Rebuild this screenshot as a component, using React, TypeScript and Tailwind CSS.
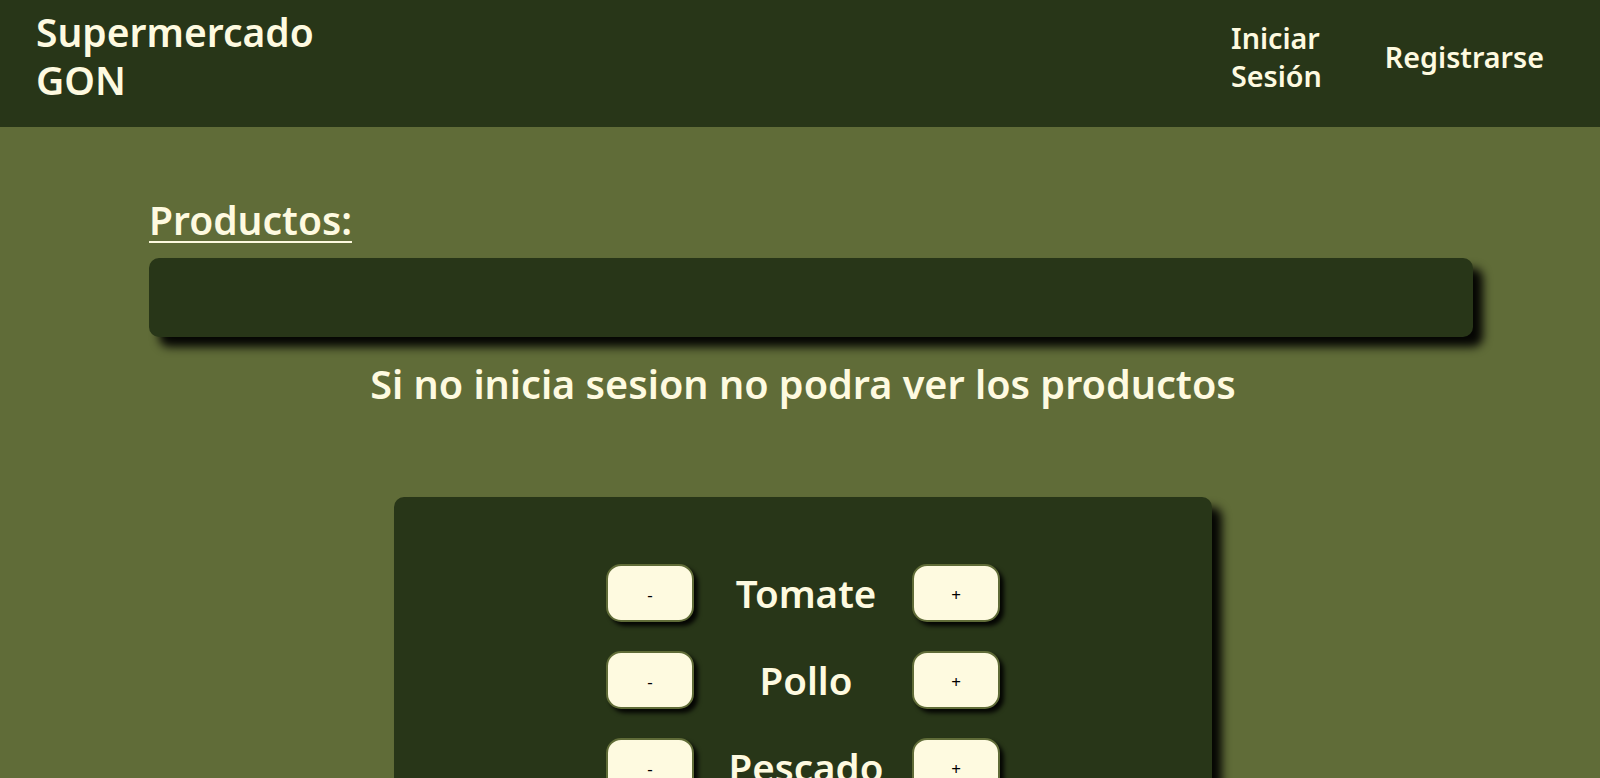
import React from "react";

const font = { fontFamily: '"Noto Sans", "Open Sans", sans-serif' };

function Row({ name }: { name: string }) {
  return (
    <div className="grid grid-cols-[88px_218px_88px] items-center h-[58px]">
      <button className="w-[88px] h-[58px] rounded-[15px] bg-[#fefae0] border-2 border-[#606c38] text-black text-[17px] pt-[3px] shadow-[4px_4px_4px_rgba(0,0,0,0.9)]">-</button>
      <div className="text-center text-[#fefae0] text-[38.5px] font-semibold leading-none pl-[6px]">{name}</div>
      <button className="w-[88px] h-[58px] rounded-[15px] bg-[#fefae0] border-2 border-[#606c38] text-black text-[17px] pt-[3px] shadow-[4px_4px_4px_rgba(0,0,0,0.9)]">+</button>
    </div>
  );
}

export default function App() {
  return (
    <div style={font} className="bg-[#606c38] overflow-hidden h-[778px]">
      <header className="h-[127px] bg-[#283618] flex items-start justify-between pl-[36px] pr-[56px]">
        <h1 className="text-[#fefae0] text-[39px] leading-[48px] font-semibold pt-[8px]">
          Supermercado
          <br />
          GON
        </h1>
        <nav className="flex items-center gap-[63px] text-[#fefae0] text-[28.7px] font-semibold mt-[19px]">
          <a className="leading-[38px] block">
            Iniciar
            <br />
            Sesión
          </a>
          <a className="leading-[38px] block">Registrarse</a>
        </nav>
      </header>
      <main className="pl-[149px] pr-[127px] pt-[73px]">
        <h2 className="text-[#fefae0] text-[39px] font-semibold underline underline-offset-[6px] decoration-[2px] leading-[40px]">Productos:</h2>
        <div className="mt-[18px] h-[79px] rounded-[10px] bg-[#283618] shadow-[10px_10px_10px_rgba(0,0,0,0.95)]"></div>
        <p className="mt-[21px] text-center text-[#fefae0] text-[39.6px] font-semibold leading-[52px] pr-[16px]">
          Si no inicia sesion no podra ver los productos
        </p>
      </main>
      <div className="flex justify-start pl-[394px] mt-[87px]">
        <div className="w-[818px] h-[400px] rounded-[10px] bg-[#283618] shadow-[10px_10px_10px_rgba(0,0,0,0.95)] flex flex-col items-center pt-[67px] gap-[29px]">
          <Row name="Tomate" />
          <Row name="Pollo" />
          <Row name="Pescado" />
        </div>
      </div>
    </div>
  );
}
